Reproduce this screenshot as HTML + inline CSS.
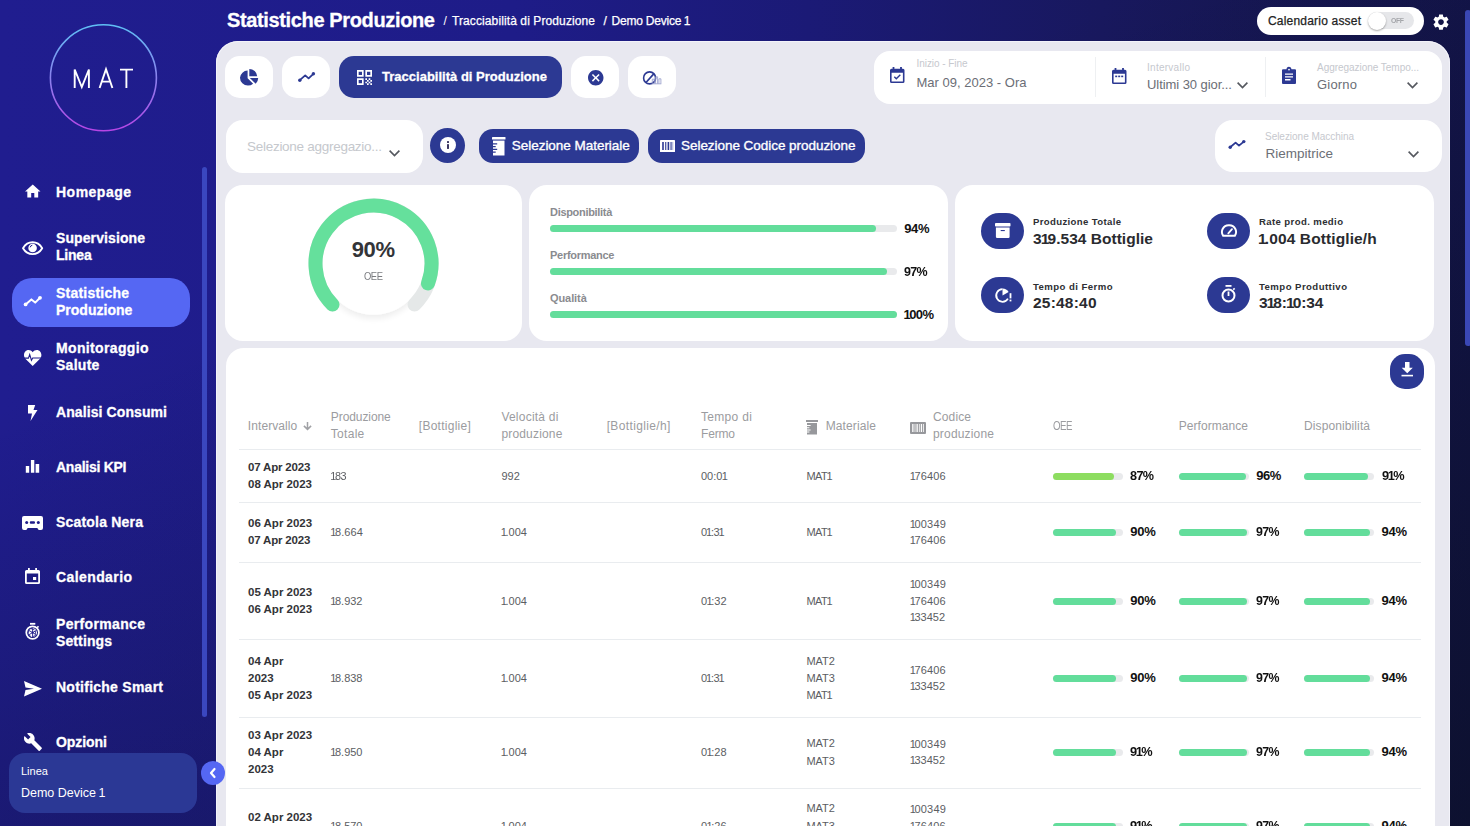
<!DOCTYPE html>
<html><head><meta charset="utf-8">
<style>
*{margin:0;padding:0;box-sizing:border-box}
html,body{width:1470px;height:826px;overflow:hidden}
body{position:relative;font-family:"Liberation Sans",sans-serif;background:linear-gradient(160deg,rgba(8,14,26,0) 30%,rgba(8,14,26,.55) 100%),linear-gradient(90deg,#201d8f 0%,#1e1c88 35%,#1b1a76 55%,#18185e 75%,#15164f 90%,#13144a 100%)}
.a{position:absolute}
.t{position:absolute;white-space:nowrap;font-family:"Liberation Sans",sans-serif}
.n1{font-weight:inherit;margin-left:-0.06em;letter-spacing:-0.12em}
.card{position:absolute;background:#fff;border-radius:18px}
.ib{position:absolute;background:#fff;border-radius:15px}
.db{position:absolute;background:#2c3993}
svg{position:absolute;overflow:visible}
.hl{position:absolute;height:1px;background:#e9ecef}
.bar{position:absolute;height:7px;border-radius:4px;background:#e9eaec}
.bar i{position:absolute;left:0;top:0;bottom:0;border-radius:4px;background:#63dd9b}
</style></head><body>
<!-- sidebar -->
<svg class="a" style="left:0;top:0" width="210" height="140">
 <defs><linearGradient id="lg" x1="0" y1="0" x2="0" y2="1"><stop offset="0" stop-color="#5fc0f5"></stop><stop offset="1" stop-color="#b745e6"></stop></linearGradient></defs>
 <circle cx="103.4" cy="77.8" r="53" fill="none" stroke="url(#lg)" stroke-width="1.6"></circle>
 <path fill="none" stroke="#fff" stroke-width="1.9" stroke-linejoin="miter" d="M74.7 88V69.5L81.8 87L88.9 69.5V88M99.6 88L106 69.2L112.4 88M101.8 81.6H110.2M120 69.6H133M126.4 69.6V88"></path>
</svg>
<div class="a" style="left:12px;top:278px;width:178px;height:49px;border-radius:20px;background:#5567f3"></div>
<div class="a" style="left:202px;top:167px;width:5px;height:550px;border-radius:3px;background:#3a47bf"></div>
<div class="a" style="left:9px;top:753px;width:188px;height:60px;border-radius:16px;background:#2b3895"></div>

<!-- nav icons -->
<svg style="left:25px;top:184px" width="15.5" height="14" viewBox="2 3 20 17"><path fill="#fff" d="M10 20v-6h4v6h5v-8h3L12 3 2 12h3v8z"></path></svg>
<svg style="left:0;top:0" width="216" height="826" viewBox="0 0 216 826"><path fill="none" stroke="#fff" stroke-width="1.9" stroke-linejoin="round" d="M23 248.2C25.4 244.2 28.8 242.3 32.6 242.3S39.8 244.2 42.2 248.2C39.8 252.2 36.4 254.1 32.6 254.1S25.4 252.2 23 248.2Z"></path><circle cx="32.6" cy="248" r="4.3" fill="#fff"></circle><path fill="none" stroke="#1f1c8a" stroke-width="1" d="M30.2 247.3A2.6 2.6 0 0 1 32.3 245.2"></path></svg>
<svg style="left:0;top:0" width="216" height="826" viewBox="0 0 216 826"><path fill="none" stroke="#fff" stroke-width="2" stroke-linejoin="round" d="M25.6 304.4L31.4 299.4L35.2 302.6L40 297.8"></path><circle cx="25.6" cy="304.4" r="1.9" fill="#fff"></circle><circle cx="40" cy="297.8" r="1.9" fill="#fff"></circle></svg>
<svg style="left:24px;top:350px" width="17.4" height="16" viewBox="0 0 18 16.5"><path fill="#fff" d="M9 16.5L1.7 9.2C.4 7.9 0 6.7 0 5.1 0 2.3 2.1 0 4.7 0 6.4 0 8 .9 9 2.4 10 .9 11.6 0 13.3 0 15.9 0 18 2.3 18 5.1c0 1.6-.4 2.8-1.7 4.1z"></path><path fill="none" stroke="#1f1c8a" stroke-width="1.1" stroke-linejoin="miter" d="M0 8.4H4.6L5.9 4.6 7.7 10.6 9 8.2H18"></path></svg>
<svg style="left:27.5px;top:405px" width="9.5" height="16" viewBox="0 0 9.5 16"><path fill="#fff" d="M0 0h7.2L5.5 5h4L2.5 16 4 8.5H0z"></path></svg>
<svg style="left:0;top:0" width="216" height="826" viewBox="0 0 216 826"><path fill="#fff" d="M25.8 466h3.4v6.7h-3.4zM30.9 460h3.4v12.7h-3.4zM35.6 464h3.6v8.7h-3.6z"></path></svg>
<svg style="left:22px;top:516px" width="21" height="14" viewBox="0 0 21 14"><path fill="#fff" d="M2 0h17a2 2 0 0 1 2 2v10a2 2 0 0 1-2 2h-2.3l-1.4-1.9H5.7L4.3 14H2a2 2 0 0 1-2-2V2a2 2 0 0 1 2-2z"></path><circle cx="4.7" cy="6.5" r="1.5" fill="#1f1c8a"></circle><rect x="7.8" y="5.3" width="5.2" height="2.5" rx="1.1" fill="#1f1c8a"></rect><circle cx="16.3" cy="6.5" r="1.5" fill="#1f1c8a"></circle></svg>
<svg style="left:25.3px;top:568px" width="15" height="16" viewBox="0 0 15 16"><path fill="#fff" d="M3 0h1.8v2h5.4V0H12v2h1.5A1.5 1.5 0 0 1 15 3.5v11a1.5 1.5 0 0 1-1.5 1.5h-12A1.5 1.5 0 0 1 0 14.5v-11A1.5 1.5 0 0 1 1.5 2H3zM1.8 5.5v8.7h11.4V5.5z"></path><rect x="8" y="9" width="3.2" height="3" fill="#fff"></rect></svg>
<svg style="left:0;top:0" width="216" height="826" viewBox="0 0 216 826"><rect x="30" y="622.9" width="5.3" height="1.8" fill="#fff"></rect><circle cx="32.6" cy="632.6" r="6.3" fill="none" stroke="#fff" stroke-width="1.8"></circle><path stroke="#fff" stroke-width="1.6" d="M37.2 627.6l1.3-1.3"></path><circle cx="32.6" cy="632.6" r="4.4" fill="#fff"></circle><path fill="none" stroke="#1f1c8a" stroke-width=".9" d="M32.6 632.6L32.6 628.2M32.6 632.6L36.4 630.4M32.6 632.6L36.4 634.8M32.6 632.6L32.6 637M32.6 632.6L28.8 634.8M32.6 632.6L28.8 630.4"></path><path fill="none" stroke="#1f1c8a" stroke-width=".8" d="M30.8 628.6l3.7 1.3M35.8 630.9l-.6 3.4M35.9 635.2l-3.4 1.6M31 636.6l-3-2.4M28 633.9l.8-3.6M28.6 629.6l3.4-1.5"></path><circle cx="32.6" cy="632.6" r="1" fill="#1f1c8a"></circle></svg>
<svg style="left:23.5px;top:681px" width="18" height="15.5" viewBox="0 0 18 15.5"><path fill="#fff" d="M0 0L18 7.75 0 15.5 1.5 9l8.5-1.25L1.5 6.5z"></path></svg>
<svg style="left:23.5px;top:733px" width="18" height="18" viewBox="1 1 22 22"><path fill="#fff" d="M22.7 19l-9.1-9.1c.9-2.3.4-5-1.5-6.9-2-2-5-2.4-7.4-1.3L9 6 6 9 1.6 4.7C.4 7.1.9 10.1 2.9 12.1c1.9 1.9 4.6 2.4 6.9 1.5l9.1 9.1c.4.4 1 .4 1.4 0l2.3-2.3c.5-.4.5-1.1.1-1.4z"></path></svg>

<!-- main panel -->
<div class="a" style="left:216px;top:41px;width:1234px;height:800px;background:#e8e8f0;border-radius:22px 22px 0 0;box-shadow:inset 0 0 0 1px #f3f3fa"></div>
<!-- collapse button -->
<div class="a" style="left:201px;top:761px;width:24px;height:24px;border-radius:12px;background:#5567f3"></div>
<svg style="left:208px;top:767px" width="10" height="12" viewBox="0 0 10 12"><path fill="none" stroke="#fff" stroke-width="2.2" stroke-linecap="round" stroke-linejoin="round" d="M6.5 2L3 6l3.5 4"></path></svg>
<!-- right scrollbar -->
<div class="a" style="left:1465px;top:10px;width:6px;height:336px;border-radius:3px;background:#3a47b5"></div>

<!-- header toggle -->
<div class="a" style="left:1257px;top:7px;width:167px;height:28px;border-radius:14px;background:#fff"></div>
<div class="a" style="left:1368px;top:12px;width:46px;height:17px;border-radius:9px;background:#e6e7ea"></div>
<div class="a" style="left:1368px;top:12px;width:18px;height:18px;border-radius:9px;background:#fff;box-shadow:0 1px 2px rgba(0,0,0,.35)"></div>
<svg style="left:1433px;top:13.8px" width="16" height="16.2" viewBox="2.6 1.9 18.8 20.2"><path fill="#fff" d="M19.14 12.94c.04-.3.06-.61.06-.94 0-.32-.02-.64-.07-.94l2.03-1.58c.18-.14.23-.41.12-.61l-1.92-3.32c-.12-.22-.37-.29-.59-.22l-2.39.96c-.5-.38-1.03-.7-1.62-.94l-.36-2.54c-.04-.24-.24-.41-.48-.41h-3.840c-.24 0-.43.17-.47.41l-.36 2.54c-.59.24-1.13.57-1.62.94l-2.39-.96c-.22-.08-.47 0-.59.22L2.74 8.87c-.12.21-.08.47.12.61l2.030 1.58c-.05.3-.09.63-.09.94s.02.64.07.94l-2.03 1.58c-.18.14-.23.41-.12.61l1.92 3.32c.12.22.37.29.59.22l2.39-.96c.5.38 1.03.7 1.62.94l.36 2.54c.05.24.24.41.48.41h3.84c.24 0 .44-.17.47-.41l.36-2.54c.59-.24 1.13-.56 1.62-.94l2.39.96c.22.08.47 0 .59-.22l1.920-3.32c.12-.22.07-.47-.12-.61l-2.01-1.58zM12 15.6c-1.98 0-3.6-1.62-3.6-3.6s1.62-3.6 3.6-3.6 3.6 1.62 3.6 3.6-1.62 3.6-3.6 3.6z"></path></svg>

<!-- toolbar row 1 -->
<div class="ib" style="left:225px;top:56px;width:48px;height:42px"></div>
<div class="ib" style="left:282px;top:56px;width:48px;height:42px"></div>
<div class="db" style="left:339px;top:56px;width:223px;height:42px;border-radius:15px"></div>
<div class="ib" style="left:570.5px;top:56px;width:48px;height:42px"></div>
<div class="ib" style="left:628px;top:56px;width:48px;height:42px"></div>
<svg style="left:240px;top:69px" width="18.5" height="17" viewBox="0 0 18.5 17"><path fill="#2c3993" d="M7.6 1.6V9.2l5.5 5.5A8.2 8.2 0 0 1 8 16.6 7.9 7.9 0 0 1 0 8.7 7.8 7.8 0 0 1 7.6 1.6z"></path><path fill="#2c3993" d="M9.3 0a8 8 0 0 1 7.9 7.3H9.3z"></path><path fill="#2c3993" d="M9.8 9.1h8.4a8 8 0 0 1-2.5 5.6z"></path></svg>
<svg style="left:250px;top:60px" width="100" height="40" viewBox="250 60 100 40"><path fill="none" stroke="#2c3993" stroke-width="1.8" stroke-linejoin="round" d="M299.8 80.2L305.2 75.4L308.6 78.4L313.4 73.8"></path><circle cx="299.8" cy="80.2" r="1.7" fill="#2c3993"></circle><circle cx="313.4" cy="73.8" r="1.7" fill="#2c3993"></circle></svg>
<svg style="left:356.5px;top:70px" width="15" height="15" viewBox="3 3 18 18"><path fill="#fff" d="M3 11h8V3H3v8zm2-6h4v4H5V5zM3 21h8v-8H3v8zm2-6h4v4H5v-4zM13 3v8h8V3h-8zm6 6h-4V5h4v4zM19 19h2v2h-2zM13 13h2v2h-2zM15 15h2v2h-2zM13 17h2v2h-2zM15 19h2v2h-2zM17 17h2v2h-2zM17 13h2v2h-2zM19 15h2v2h-2z"></path></svg>
<svg style="left:587.5px;top:70px" width="15.5" height="15.5" viewBox="2 2 20 20"><path fill="#2c3993" d="M12 2C6.47 2 2 6.47 2 12s4.47 10 10 10 10-4.47 10-10S17.530 2 12 2zm5 13.590L15.59 17 12 13.41 8.41 17 7 15.59 10.59 12 7 8.41 8.41 7 12 10.59 15.59 7 17 8.41 13.41 12 17 15.59z"></path></svg>
<svg style="left:630px;top:60px" width="40" height="35" viewBox="630 60 40 35"><circle cx="649.6" cy="77.9" r="6" fill="none" stroke="#2c3993" stroke-width="1.6"></circle><path stroke="#2c3993" stroke-width="1.7" d="M646.2 82.3L654 73.6"></path><path fill="none" stroke="#9097c8" stroke-width=".8" d="M652.3 83.6v-4.4h2v4.4M655.6 83.6v-6.8h2v6.8M658.9 83.6v-4.8h2v4.8M651.8 83.8h9.5"></path></svg>

<!-- date panel -->
<div class="card" style="left:874px;top:51px;width:567.5px;height:53px;border-radius:16px"></div>
<div class="a" style="left:1095px;top:57px;width:1px;height:40px;background:#eef0f2"></div>
<div class="a" style="left:1265px;top:57px;width:1px;height:40px;background:#eef0f2"></div>
<svg style="left:890px;top:67px" width="14.5" height="16" viewBox="0 0 14.5 16"><path fill="#2c3993" d="M2.6 0h1.8v1.8h5.7V0h1.8v1.8h1.1a1.5 1.5 0 0 1 1.5 1.5V14.5a1.5 1.5 0 0 1-1.5 1.5H1.5A1.5 1.5 0 0 1 0 14.5V3.3a1.5 1.5 0 0 1 1.5-1.5h1.1zM1.6 5.8v8.6h11.3V5.8z"></path><path fill="none" stroke="#2c3993" stroke-width="1.4" d="M4.3 9.8l2 2 4-4"></path></svg>
<svg style="left:1111.5px;top:68px" width="14.5" height="16" viewBox="0 0 14.5 16"><path fill="#2c3993" d="M2.6 0h1.8v1.8h5.7V0h1.8v1.8h1.1a1.5 1.5 0 0 1 1.5 1.5V14.5a1.5 1.5 0 0 1-1.5 1.5H1.5A1.5 1.5 0 0 1 0 14.5V3.3a1.5 1.5 0 0 1 1.5-1.5h1.1zM1.6 5.8v8.6h11.3V5.8z"></path><rect x="3.2" y="7.6" width="2" height="1.6" fill="#2c3993"></rect><rect x="6.2" y="7.6" width="2" height="1.6" fill="#2c3993"></rect><rect x="9.2" y="7.6" width="2" height="1.6" fill="#2c3993"></rect></svg>
<svg style="left:1282px;top:67.5px" width="14" height="16" viewBox="0 0 14 16"><path fill="#2c3993" d="M4.5 1.2A2.5 2.5 0 0 1 9.5 1.2H13a1 1 0 0 1 1 1V15a1 1 0 0 1-1 1H1a1 1 0 0 1-1-1V2.2a1 1 0 0 1 1-1z"></path><path fill="#fff" d="M3 5.5h8v1.3H3zM3 8.3h8v1.3H3zM3 11.1h5.5v1.3H3z"></path><circle cx="7" cy="1.6" r="0.9" fill="#fff"></circle></svg>
<svg style="left:1237px;top:81.5px" width="11" height="7" viewBox="0 0 11 7"><path fill="none" stroke="#55585f" stroke-width="1.6" d="M.6.6l4.9 5 4.9-5"></path></svg>
<svg style="left:1407px;top:81.5px" width="11" height="7" viewBox="0 0 11 7"><path fill="none" stroke="#55585f" stroke-width="1.6" d="M.6.6l4.9 5 4.9-5"></path></svg>

<!-- toolbar row 2 -->
<div class="card" style="left:225.5px;top:119.5px;width:197.5px;height:53px;border-radius:17px"></div>
<svg style="left:388.5px;top:150px" width="11" height="7" viewBox="0 0 11 7"><path fill="none" stroke="#55585f" stroke-width="1.6" d="M.6.6l4.9 5 4.9-5"></path></svg>
<div class="db" style="left:430px;top:128px;width:35px;height:35px;border-radius:18px"></div>
<div class="a" style="left:439.8px;top:137px;width:16.4px;height:16.4px;border-radius:9px;background:#fff"></div>
<div class="a" style="left:446.9px;top:141.2px;width:2px;height:1.9px;border-radius:.5px;background:#3a3560"></div>
<div class="a" style="left:446.9px;top:144.2px;width:2px;height:4.8px;border-radius:.4px;background:#3a3560"></div>
<div class="db" style="left:478.5px;top:128.5px;width:160px;height:34.5px;border-radius:14px"></div>
<div class="db" style="left:648px;top:128.5px;width:216.5px;height:34.5px;border-radius:14px"></div>
<svg style="left:492px;top:137px" width="13.5" height="18.5" viewBox="0 0 13.5 18.5"><rect x="0" y="0" width="13.5" height="2.6" rx=".6" fill="#fff"></rect><path fill="#fff" d="M1 3.6h11.5v14.9H1z"></path><path fill="#2c3993" d="M1 6.2h4.2v1.2H1zM1 9h2.7v1.2H1zM1 11.8h4.2V13H1zM1 14.6h2.7v1.2H1z"></path></svg>
<svg style="left:660px;top:140px" width="15" height="12" viewBox="0 0 15 12"><rect x="0" y="0" width="15" height="12" rx=".6" fill="#fff"></rect><path fill="#2c3993" d="M2.2 2h1.6v8H2.2zM5.2 2h1.1v8H5.2zM7.6 2h1.6v8H7.6zM10.5 2h1.1v8h-1.1z"></path><path fill="#8f96cc" d="M12.4 2h.8v8h-.8z"></path></svg>
<div class="card" style="left:1214.5px;top:120px;width:227px;height:52px;border-radius:18px"></div>
<svg style="left:1220px;top:130px" width="40" height="30" viewBox="1220 130 40 30"><path fill="none" stroke="#2c3993" stroke-width="1.8" stroke-linejoin="round" d="M1230.2 147.2L1235.6 142.6L1239 145.6L1243.8 141.6"></path><circle cx="1230.2" cy="147.2" r="1.7" fill="#2c3993"></circle><circle cx="1243.8" cy="141.6" r="1.7" fill="#2c3993"></circle></svg>
<svg style="left:1408px;top:150.5px" width="11" height="7" viewBox="0 0 11 7"><path fill="none" stroke="#55585f" stroke-width="1.6" d="M.6.6l4.9 5 4.9-5"></path></svg>

<!-- cards row -->
<div class="card" style="left:225px;top:185px;width:297px;height:156px"></div>
<div class="card" style="left:529px;top:185px;width:419px;height:156px"></div>
<div class="card" style="left:954.5px;top:185px;width:479.5px;height:156px"></div>

<!-- gauge -->
<svg style="left:300px;top:190px" width="148" height="140" viewBox="300 190 148 140">
 <defs><filter id="sh" x="-30%" y="-30%" width="160%" height="160%"><feGaussianBlur in="SourceAlpha" stdDeviation="3"></feGaussianBlur><feOffset dy="4"></feOffset><feComponentTransfer><feFuncA type="linear" slope=".07"></feFuncA></feComponentTransfer><feMerge><feMergeNode></feMergeNode><feMergeNode in="SourceGraphic"></feMergeNode></feMerge></filter></defs>
 <circle cx="373.5" cy="263.6" r="51" fill="#fff" filter="url(#sh)"></circle>
 <path id="gbg" fill="none" stroke="#e5e8e8" stroke-width="14" stroke-linecap="round" d="M332.49 304.61 A58 58 0 1 1 414.51 304.61"></path>
 <path fill="none" stroke="#65e09c" stroke-width="14" stroke-linecap="round" d="M332.49 304.61 A58 58 0 1 1 428.0 283.44"></path>
</svg>

<!-- bars card -->
<div class="bar" style="left:550px;top:224.5px;width:347px"><i style="width:326px"></i></div>
<div class="bar" style="left:550px;top:268px;width:347px"><i style="width:337px"></i></div>
<div class="bar" style="left:550px;top:311.3px;width:347px"><i style="width:347px"></i></div>

<!-- KPI icons -->
<div class="db" style="left:981px;top:212.5px;width:42.5px;height:36px;border-radius:18px"></div>
<div class="db" style="left:981px;top:277px;width:42.5px;height:36px;border-radius:18px"></div>
<div class="db" style="left:1207px;top:212.5px;width:42.5px;height:36px;border-radius:18px"></div>
<div class="db" style="left:1207px;top:277px;width:42.5px;height:36px;border-radius:18px"></div>
<svg style="left:994.5px;top:223px" width="15.5" height="15" viewBox="0 0 15.5 15"><rect x="0" y="0" width="15.5" height="3.6" rx=".8" fill="#fff"></rect><path fill="#fff" d="M.9 4.6h13.7v9.2a1.2 1.2 0 0 1-1.2 1.2H2.1A1.2 1.2 0 0 1 .9 13.8z"></path><rect x="5.7" y="7" width="4.1" height="1.1" fill="#2c3993"></rect></svg>
<svg style="left:1220.5px;top:224px" width="16" height="13" viewBox="0 0 16 13"><path fill="none" stroke="#fff" stroke-width="2" d="M2.2 11.8A6.7 6.7 0 0 1 8 1.2a6.7 6.7 0 0 1 5.8 10.6z"></path><path stroke="#fff" stroke-width="1.8" stroke-linecap="round" d="M7.3 9.4L11 5.2"></path></svg>
<svg style="left:960px;top:260px" width="80" height="80" viewBox="960 260 80 80"><path fill="none" stroke="#fff" stroke-width="1.8" d="M1002.5 289.2A6.3 6.3 0 1 0 1007.96 298.65"></path><path fill="#fff" d="M1002.5 295.5V288.4A7.1 7.1 0 0 1 1008.65 291.95z"></path><rect x="1009.6" y="293.2" width="1.8" height="5.2" fill="#fff"></rect><rect x="1009.6" y="299.6" width="1.8" height="1.8" fill="#fff"></rect></svg>
<svg style="left:1221px;top:285px" width="15" height="18" viewBox="0 0 15 18"><rect x="4.5" y="0" width="6" height="1.8" fill="#fff"></rect><circle cx="7.5" cy="10.5" r="6" fill="none" stroke="#fff" stroke-width="2"></circle><path stroke="#fff" stroke-width="1.8" d="M7.5 6.5v4.5"></path><path stroke="#fff" stroke-width="1.6" d="M12.2 4.6l1.5-1.3"></path></svg>

<!-- table card -->
<div class="card" style="left:225.5px;top:348px;width:1209px;height:500px"></div>
<div class="db" style="left:1389.5px;top:354px;width:34.5px;height:34.5px;border-radius:15px"></div>
<svg style="left:1400.5px;top:362px" width="12.5" height="15" viewBox="0 0 12.5 15"><path fill="#fff" d="M4 0h4.5v5.8h3.3L6.25 11.2.7 5.8H4z"></path><rect x="0.5" y="12.8" width="11.5" height="1.6" fill="#fff"></rect></svg>
<svg style="left:302.5px;top:422px" width="9" height="8" viewBox="0 0 9 8"><path fill="none" stroke="#a0a1a5" stroke-width="1.5" d="M4.5 0v7.2M.9 3.9l3.6 3.5 3.6-3.5"></path></svg>
<svg style="left:806px;top:419.5px" width="12" height="14.5" viewBox="0 0 12 14.5"><rect x="0" y="0" width="12" height="2" fill="#97989c"></rect><path fill="#97989c" d="M1 3h10v11.5H1z"></path><path fill="#fff" d="M1 5h3.6v1H1zM1 7.2h2.4v1H1zM1 9.4h3.6v1H1zM1 11.6h2.4v1H1z"></path></svg>
<svg style="left:909.5px;top:421.5px" width="16" height="12" viewBox="0 0 16 12"><rect x="0" y="0" width="16" height="12" rx="1" fill="#97989c"></rect><path fill="#fff" d="M2.2 2h1.3v8H2.2zM4.6 2h.8v8h-.8zM6.5 2h1.3v8H6.5zM8.9 2h.8v8h-.8zM10.8 2h1.3v8h-1.3zM13 2h.8v8H13z"></path></svg>
<div class="hl" style="left:239px;top:449px;width:1182px"></div>
<div class="hl" style="left:239px;top:502px;width:1182px"></div>
<div class="hl" style="left:239px;top:562px;width:1182px"></div>
<div class="hl" style="left:239px;top:639px;width:1182px"></div>
<div class="hl" style="left:239px;top:717px;width:1182px"></div>
<div class="hl" style="left:239px;top:787.5px;width:1182px"></div>
<div class="bar" style="left:1052.8px;top:472.5px;width:70px"><i style="width:60.9px;background:#8ddd60"></i></div>
<div class="bar" style="left:1178.8px;top:472.5px;width:70px"><i style="width:67.2px;background:#63dd9b"></i></div>
<div class="bar" style="left:1304.0px;top:472.5px;width:70px"><i style="width:63.7px;background:#63dd9b"></i></div>
<div class="bar" style="left:1052.8px;top:529.0px;width:70px"><i style="width:63.0px;background:#63dd9b"></i></div>
<div class="bar" style="left:1178.8px;top:529.0px;width:70px"><i style="width:67.9px;background:#63dd9b"></i></div>
<div class="bar" style="left:1304.0px;top:529.0px;width:70px"><i style="width:65.8px;background:#63dd9b"></i></div>
<div class="bar" style="left:1052.8px;top:597.5px;width:70px"><i style="width:63.0px;background:#63dd9b"></i></div>
<div class="bar" style="left:1178.8px;top:597.5px;width:70px"><i style="width:67.9px;background:#63dd9b"></i></div>
<div class="bar" style="left:1304.0px;top:597.5px;width:70px"><i style="width:65.8px;background:#63dd9b"></i></div>
<div class="bar" style="left:1052.8px;top:675.0px;width:70px"><i style="width:63.0px;background:#63dd9b"></i></div>
<div class="bar" style="left:1178.8px;top:675.0px;width:70px"><i style="width:67.9px;background:#63dd9b"></i></div>
<div class="bar" style="left:1304.0px;top:675.0px;width:70px"><i style="width:65.8px;background:#63dd9b"></i></div>
<div class="bar" style="left:1052.8px;top:749.0px;width:70px"><i style="width:63.7px;background:#63dd9b"></i></div>
<div class="bar" style="left:1178.8px;top:749.0px;width:70px"><i style="width:67.9px;background:#63dd9b"></i></div>
<div class="bar" style="left:1304.0px;top:749.0px;width:70px"><i style="width:65.8px;background:#63dd9b"></i></div>
<div class="bar" style="left:1052.8px;top:822.5px;width:70px"><i style="width:63.7px;background:#63dd9b"></i></div>
<div class="bar" style="left:1178.8px;top:822.5px;width:70px"><i style="width:67.9px;background:#63dd9b"></i></div>
<div class="bar" style="left:1304.0px;top:822.5px;width:70px"><i style="width:65.8px;background:#63dd9b"></i></div>

<span class="t" style="left: 227px; top: 10.07px; font-size: 20px; line-height: 20px; font-weight: 700; color: rgb(255, 255, 255); -webkit-text-stroke: 0.3px rgb(255, 255, 255); letter-spacing: -0.362px;">Statistiche Produzione</span>
<span class="t" style="left:443.50px;top:15.34px;font-size:12px;line-height:12px;font-weight:700;color:#ffffff;-webkit-text-stroke:0.3px #ffffff;-webkit-text-stroke:0;font-weight:400;">/</span>
<span class="t" style="left: 452px; top: 15.34px; font-size: 12px; line-height: 12px; font-weight: 400; color: rgb(255, 255, 255); -webkit-text-stroke: 0.25px rgb(255, 255, 255); letter-spacing: 0.104px;">Tracciabilità di Produzione</span>
<span class="t" style="left:603.50px;top:15.34px;font-size:12px;line-height:12px;font-weight:400;color:#ffffff;-webkit-text-stroke:0.25px #ffffff;font-weight:400;">/</span>
<span class="t" style="left: 611.5px; top: 15.34px; font-size: 12px; line-height: 12px; font-weight: 400; color: rgb(255, 255, 255); -webkit-text-stroke: 0.25px rgb(255, 255, 255); letter-spacing: -0.198px;">Demo Device <b class="n1">1</b></span>
<span class="t" style="left: 1268px; top: 14.54px; font-size: 12px; line-height: 12px; font-weight: 400; color: rgb(34, 34, 34); -webkit-text-stroke: 0.25px rgb(34, 34, 34); letter-spacing: 0.196px;">Calendario asset</span>
<span class="t" style="left: 1390.7px; top: 17.05px; font-size: 7.5px; line-height: 7.5px; font-weight: 700; color: rgb(164, 166, 170); letter-spacing: -0.375px; transform: scaleX(0.9123); transform-origin: 0px 0px;">OFF</span>
<span class="t" style="left: 56px; top: 185.15px; font-size: 14px; line-height: 14px; font-weight: 700; color: rgb(255, 255, 255); -webkit-text-stroke: 0.3px rgb(255, 255, 255); letter-spacing: 0.489px;">Homepage</span>
<span class="t" style="left: 56px; top: 231.15px; font-size: 14px; line-height: 14px; font-weight: 700; color: rgb(255, 255, 255); -webkit-text-stroke: 0.3px rgb(255, 255, 255); letter-spacing: 0.098px;">Supervisione</span>
<span class="t" style="left: 56px; top: 247.95px; font-size: 14px; line-height: 14px; font-weight: 700; color: rgb(255, 255, 255); -webkit-text-stroke: 0.3px rgb(255, 255, 255); letter-spacing: -0.22px;">Linea</span>
<span class="t" style="left: 56px; top: 286.15px; font-size: 14px; line-height: 14px; font-weight: 700; color: rgb(255, 255, 255); -webkit-text-stroke: 0.3px rgb(255, 255, 255); letter-spacing: 0.219px;">Statistiche</span>
<span class="t" style="left: 56px; top: 302.95px; font-size: 14px; line-height: 14px; font-weight: 700; color: rgb(255, 255, 255); -webkit-text-stroke: 0.3px rgb(255, 255, 255); letter-spacing: 0.007px;">Produzione</span>
<span class="t" style="left: 56px; top: 341.15px; font-size: 14px; line-height: 14px; font-weight: 700; color: rgb(255, 255, 255); -webkit-text-stroke: 0.3px rgb(255, 255, 255); letter-spacing: 0.349px;">Monitoraggio</span>
<span class="t" style="left: 56px; top: 357.95px; font-size: 14px; line-height: 14px; font-weight: 700; color: rgb(255, 255, 255); -webkit-text-stroke: 0.3px rgb(255, 255, 255); letter-spacing: 0.277px;">Salute</span>
<span class="t" style="left: 56px; top: 405.15px; font-size: 14px; line-height: 14px; font-weight: 700; color: rgb(255, 255, 255); -webkit-text-stroke: 0.3px rgb(255, 255, 255); letter-spacing: 0.094px;">Analisi Consumi</span>
<span class="t" style="left: 56px; top: 460.15px; font-size: 14px; line-height: 14px; font-weight: 700; color: rgb(255, 255, 255); -webkit-text-stroke: 0.3px rgb(255, 255, 255); letter-spacing: -0.264px;">Analisi KPI</span>
<span class="t" style="left: 56px; top: 515.15px; font-size: 14px; line-height: 14px; font-weight: 700; color: rgb(255, 255, 255); -webkit-text-stroke: 0.3px rgb(255, 255, 255); letter-spacing: 0.197px;">Scatola Nera</span>
<span class="t" style="left: 56px; top: 570.15px; font-size: 14px; line-height: 14px; font-weight: 700; color: rgb(255, 255, 255); -webkit-text-stroke: 0.3px rgb(255, 255, 255); letter-spacing: 0.405px;">Calendario</span>
<span class="t" style="left: 56px; top: 617.15px; font-size: 14px; line-height: 14px; font-weight: 700; color: rgb(255, 255, 255); -webkit-text-stroke: 0.3px rgb(255, 255, 255); letter-spacing: 0.341px;">Performance</span>
<span class="t" style="left: 56px; top: 633.95px; font-size: 14px; line-height: 14px; font-weight: 700; color: rgb(255, 255, 255); -webkit-text-stroke: 0.3px rgb(255, 255, 255); letter-spacing: 0.109px;">Settings</span>
<span class="t" style="left: 56px; top: 680.15px; font-size: 14px; line-height: 14px; font-weight: 700; color: rgb(255, 255, 255); -webkit-text-stroke: 0.3px rgb(255, 255, 255); letter-spacing: 0.252px;">Notifiche Smart</span>
<span class="t" style="left: 56px; top: 735.15px; font-size: 14px; line-height: 14px; font-weight: 700; color: rgb(255, 255, 255); -webkit-text-stroke: 0.3px rgb(255, 255, 255); letter-spacing: -0.071px;">Opzioni</span>
<span class="t" style="left:21.00px;top:765.69px;font-size:11px;line-height:11px;font-weight:400;color:#ffffff;">Linea</span>
<span class="t" style="left: 21px; top: 787.22px; font-size: 12.5px; line-height: 12.5px; font-weight: 400; color: rgb(255, 255, 255); letter-spacing: -0.017px;">Demo Device <b class="n1">1</b></span>
<span class="t" style="left: 382px; top: 69.8px; font-size: 13px; line-height: 13px; font-weight: 700; color: rgb(255, 255, 255); -webkit-text-stroke: 0.3px rgb(255, 255, 255); letter-spacing: 0.011px;">Tracciabilità di Produzione</span>
<span class="t" style="left: 916.5px; top: 58.94px; font-size: 10px; line-height: 10px; font-weight: 400; color: rgb(198, 200, 206); letter-spacing: -0.057px;">Inizio - Fine</span>
<span class="t" style="left: 916.5px; top: 75.6px; font-size: 13px; line-height: 13px; font-weight: 400; color: rgb(107, 110, 118); letter-spacing: 0.01px;">Mar 09, 2023 - Ora</span>
<span class="t" style="left: 1147px; top: 62.94px; font-size: 10px; line-height: 10px; font-weight: 400; color: rgb(198, 200, 206); letter-spacing: 0.269px;">Intervallo</span>
<span class="t" style="left: 1147px; top: 78px; font-size: 13px; line-height: 13px; font-weight: 400; color: rgb(107, 110, 118); letter-spacing: -0.062px;">Ultimi 30 gior...</span>
<span class="t" style="left: 1317px; top: 62.94px; font-size: 10px; line-height: 10px; font-weight: 400; color: rgb(198, 200, 206); letter-spacing: -0.034px;">Aggregazione Tempo...</span>
<span class="t" style="left: 1317px; top: 78px; font-size: 13px; line-height: 13px; font-weight: 400; color: rgb(107, 110, 118); letter-spacing: 0.194px;">Giorno</span>
<span class="t" style="left: 247px; top: 139.57px; font-size: 13.5px; line-height: 13.5px; font-weight: 400; color: rgb(197, 200, 205); letter-spacing: -0.278px;">Selezione aggregazio...</span>
<span class="t" style="left: 511.8px; top: 139.27px; font-size: 13.5px; line-height: 13.5px; font-weight: 400; color: rgb(255, 255, 255); -webkit-text-stroke: 0.35px rgb(255, 255, 255); letter-spacing: -0.032px;">Selezione Materiale</span>
<span class="t" style="left: 681px; top: 139.27px; font-size: 13.5px; line-height: 13.5px; font-weight: 400; color: rgb(255, 255, 255); -webkit-text-stroke: 0.35px rgb(255, 255, 255); letter-spacing: -0.043px;">Selezione Codice produzione</span>
<span class="t" style="left: 1265px; top: 131.84px; font-size: 10px; line-height: 10px; font-weight: 400; color: rgb(198, 200, 206); letter-spacing: -0.029px;">Selezione Macchina</span>
<span class="t" style="left: 1265.4px; top: 146.57px; font-size: 13.5px; line-height: 13.5px; font-weight: 400; color: rgb(108, 111, 118); letter-spacing: -0.002px;">Riempitrice</span>
<span class="t" style="left: 351.8px; top: 239.18px; font-size: 22px; line-height: 22px; font-weight: 700; color: rgb(51, 52, 56); letter-spacing: -0.423px;">90%</span>
<span class="t" style="left: 363.8px; top: 271.31px; font-size: 10.5px; line-height: 10.5px; font-weight: 400; color: rgb(122, 124, 128); letter-spacing: -0.525px; transform: scaleX(0.8989); transform-origin: 0px 0px;">OEE</span>
<span class="t" style="left: 550px; top: 206.69px; font-size: 11px; line-height: 11px; font-weight: 700; color: rgb(138, 139, 143); letter-spacing: -0.308px;">Disponibilità</span>
<span class="t" style="left: 550px; top: 249.69px; font-size: 11px; line-height: 11px; font-weight: 700; color: rgb(138, 139, 143); letter-spacing: -0.277px;">Performance</span>
<span class="t" style="left: 550px; top: 292.69px; font-size: 11px; line-height: 11px; font-weight: 700; color: rgb(138, 139, 143); letter-spacing: -0.083px;">Qualità</span>
<span class="t" style="left: 904.3px; top: 221.6px; font-size: 13px; line-height: 13px; font-weight: 700; color: rgb(17, 17, 17); letter-spacing: -0.416px;">94%</span>
<span class="t" style="left: 904.3px; top: 264.6px; font-size: 13px; line-height: 13px; font-weight: 700; color: rgb(17, 17, 17); letter-spacing: -0.65px; transform: scaleX(0.9583); transform-origin: 0px 0px;">97%</span>
<span class="t" style="left: 904.3px; top: 307.6px; font-size: 13px; line-height: 13px; font-weight: 700; color: rgb(17, 17, 17); letter-spacing: -0.634px;"><b class="n1">1</b>00%</span>
<span class="t" style="left: 1033px; top: 216.87px; font-size: 9.6px; line-height: 9.6px; font-weight: 700; color: rgb(46, 47, 51); letter-spacing: 0.348px;">Produzione Totale</span>
<span class="t" style="left: 1033px; top: 231.08px; font-size: 15.5px; line-height: 15.5px; font-weight: 700; color: rgb(42, 43, 47); letter-spacing: 0.027px;">3<b class="n1">1</b>9.534 Bottiglie</span>
<span class="t" style="left: 1033px; top: 282.07px; font-size: 9.6px; line-height: 9.6px; font-weight: 700; color: rgb(46, 47, 51); letter-spacing: 0.429px;">Tempo di Fermo</span>
<span class="t" style="left: 1033px; top: 295.48px; font-size: 15.5px; line-height: 15.5px; font-weight: 700; color: rgb(42, 43, 47); letter-spacing: 0.208px;">25:48:40</span>
<span class="t" style="left: 1259px; top: 216.87px; font-size: 9.6px; line-height: 9.6px; font-weight: 700; color: rgb(46, 47, 51); letter-spacing: 0.376px;">Rate prod. medio</span>
<span class="t" style="left: 1259px; top: 231.08px; font-size: 15.5px; line-height: 15.5px; font-weight: 700; color: rgb(42, 43, 47); letter-spacing: 0.105px;"><b class="n1">1</b>.004 Bottiglie/h</span>
<span class="t" style="left: 1259px; top: 282.07px; font-size: 9.6px; line-height: 9.6px; font-weight: 700; color: rgb(46, 47, 51); letter-spacing: 0.442px;">Tempo Produttivo</span>
<span class="t" style="left: 1259px; top: 295.48px; font-size: 15.5px; line-height: 15.5px; font-weight: 700; color: rgb(42, 43, 47); letter-spacing: -0.143px;">3<b class="n1">1</b>8:<b class="n1">1</b>0:34</span>
<span class="t" style="left: 247.8px; top: 419.54px; font-size: 12px; line-height: 12px; font-weight: 400; color: rgb(155, 156, 160); letter-spacing: 0.089px;">Intervallo</span>
<span class="t" style="left: 330.8px; top: 410.84px; font-size: 12px; line-height: 12px; font-weight: 400; color: rgb(155, 156, 160); letter-spacing: -0.08px;">Produzione</span>
<span class="t" style="left: 330.8px; top: 428.34px; font-size: 12px; line-height: 12px; font-weight: 400; color: rgb(155, 156, 160); letter-spacing: 0.294px;">Totale</span>
<span class="t" style="left: 418.8px; top: 419.54px; font-size: 12px; line-height: 12px; font-weight: 400; color: rgb(155, 156, 160); letter-spacing: 0.264px;">[Bottiglie]</span>
<span class="t" style="left: 501.4px; top: 410.84px; font-size: 12px; line-height: 12px; font-weight: 400; color: rgb(155, 156, 160); letter-spacing: 0.23px;">Velocità di</span>
<span class="t" style="left: 501.4px; top: 428.34px; font-size: 12px; line-height: 12px; font-weight: 400; color: rgb(155, 156, 160); letter-spacing: 0.179px;">produzione</span>
<span class="t" style="left: 606.7px; top: 419.54px; font-size: 12px; line-height: 12px; font-weight: 400; color: rgb(155, 156, 160); letter-spacing: 0.352px;">[Bottiglie/h]</span>
<span class="t" style="left: 701px; top: 410.84px; font-size: 12px; line-height: 12px; font-weight: 400; color: rgb(155, 156, 160); letter-spacing: 0.3px;">Tempo di</span>
<span class="t" style="left: 701px; top: 428.34px; font-size: 12px; line-height: 12px; font-weight: 400; color: rgb(155, 156, 160); letter-spacing: -0.168px;">Fermo</span>
<span class="t" style="left: 825.7px; top: 419.54px; font-size: 12px; line-height: 12px; font-weight: 400; color: rgb(155, 156, 160); letter-spacing: 0.118px;">Materiale</span>
<span class="t" style="left: 933px; top: 410.84px; font-size: 12px; line-height: 12px; font-weight: 400; color: rgb(155, 156, 160); letter-spacing: 0.128px;">Codice</span>
<span class="t" style="left: 933px; top: 428.34px; font-size: 12px; line-height: 12px; font-weight: 400; color: rgb(155, 156, 160); letter-spacing: 0.179px;">produzione</span>
<span class="t" style="left: 1052.8px; top: 419.54px; font-size: 12px; line-height: 12px; font-weight: 400; color: rgb(155, 156, 160); letter-spacing: -0.6px; transform: scaleX(0.8077); transform-origin: 0px 0px;">OEE</span>
<span class="t" style="left: 1178.8px; top: 419.54px; font-size: 12px; line-height: 12px; font-weight: 400; color: rgb(155, 156, 160); letter-spacing: 0.05px;">Performance</span>
<span class="t" style="left: 1304px; top: 419.54px; font-size: 12px; line-height: 12px; font-weight: 400; color: rgb(155, 156, 160); letter-spacing: 0.108px;">Disponibilità</span>
<span class="t" style="left: 248px; top: 461.89px; font-size: 11.5px; line-height: 11.5px; font-weight: 700; color: rgb(51, 52, 56); letter-spacing: -0.176px;">07 Apr 2023</span>
<span class="t" style="left: 248px; top: 478.69px; font-size: 11.5px; line-height: 11.5px; font-weight: 700; color: rgb(51, 52, 56); letter-spacing: -0.016px;">08 Apr 2023</span>
<span class="t" style="left: 330.8px; top: 470.54px; font-size: 11px; line-height: 11px; font-weight: 400; color: rgb(91, 93, 98); letter-spacing: -0.55px; transform: scaleX(0.9898); transform-origin: 0px 0px;"><b class="n1">1</b>83</span>
<span class="t" style="left:501.40px;top:470.54px;font-size:11px;line-height:11px;font-weight:400;color:#5b5d62;">992</span>
<span class="t" style="left:701.00px;top:470.54px;font-size:11px;line-height:11px;font-weight:400;color:#5b5d62;">00:0<b class="n1">1</b></span>
<span class="t" style="left: 806.4px; top: 470.54px; font-size: 11px; line-height: 11px; font-weight: 400; color: rgb(91, 93, 98); letter-spacing: -0.521px;">MAT<b class="n1">1</b></span>
<span class="t" style="left: 910.3px; top: 470.54px; font-size: 11px; line-height: 11px; font-weight: 400; color: rgb(91, 93, 98); letter-spacing: 0.119px;"><b class="n1">1</b>76406</span>
<span class="t" style="left: 1130.3px; top: 468.65px; font-size: 13px; line-height: 13px; font-weight: 700; color: rgb(17, 17, 17); letter-spacing: -0.65px; transform: scaleX(0.9704); transform-origin: 0px 0px;">87%</span>
<span class="t" style="left: 1256.3px; top: 468.65px; font-size: 13px; line-height: 13px; font-weight: 700; color: rgb(17, 17, 17); letter-spacing: -0.516px;">96%</span>
<span class="t" style="left: 1381.5px; top: 468.65px; font-size: 13px; line-height: 13px; font-weight: 700; color: rgb(17, 17, 17); letter-spacing: -0.65px; transform: scaleX(0.982); transform-origin: 0px 0px;">9<b class="n1">1</b>%</span>
<span class="t" style="left:248.00px;top:518.39px;font-size:11.5px;line-height:11.5px;font-weight:700;color:#333438;">06 Apr 2023</span>
<span class="t" style="left: 248px; top: 535.19px; font-size: 11.5px; line-height: 11.5px; font-weight: 700; color: rgb(51, 52, 56); letter-spacing: -0.176px;">07 Apr 2023</span>
<span class="t" style="left: 330.8px; top: 527.04px; font-size: 11px; line-height: 11px; font-weight: 400; color: rgb(91, 93, 98); letter-spacing: 0.071px;"><b class="n1">1</b>8.664</span>
<span class="t" style="left:501.40px;top:527.04px;font-size:11px;line-height:11px;font-weight:400;color:#5b5d62;"><b class="n1">1</b>.004</span>
<span class="t" style="left: 701px; top: 527.04px; font-size: 11px; line-height: 11px; font-weight: 400; color: rgb(91, 93, 98); letter-spacing: -0.406px;">0<b class="n1">1</b>:3<b class="n1">1</b></span>
<span class="t" style="left: 806.4px; top: 527.04px; font-size: 11px; line-height: 11px; font-weight: 400; color: rgb(91, 93, 98); letter-spacing: -0.521px;">MAT<b class="n1">1</b></span>
<span class="t" style="left: 910.3px; top: 518.74px; font-size: 11px; line-height: 11px; font-weight: 400; color: rgb(91, 93, 98); letter-spacing: 0.199px;"><b class="n1">1</b>00349</span>
<span class="t" style="left: 910.3px; top: 535.34px; font-size: 11px; line-height: 11px; font-weight: 400; color: rgb(91, 93, 98); letter-spacing: 0.119px;"><b class="n1">1</b>76406</span>
<span class="t" style="left: 1130.3px; top: 525.15px; font-size: 13px; line-height: 13px; font-weight: 700; color: rgb(17, 17, 17); letter-spacing: -0.266px;">90%</span>
<span class="t" style="left: 1256.3px; top: 525.15px; font-size: 13px; line-height: 13px; font-weight: 700; color: rgb(17, 17, 17); letter-spacing: -0.65px; transform: scaleX(0.9502); transform-origin: 0px 0px;">97%</span>
<span class="t" style="left: 1381.5px; top: 525.15px; font-size: 13px; line-height: 13px; font-weight: 700; color: rgb(17, 17, 17); letter-spacing: -0.266px;">94%</span>
<span class="t" style="left:248.00px;top:586.89px;font-size:11.5px;line-height:11.5px;font-weight:700;color:#333438;">05 Apr 2023</span>
<span class="t" style="left:248.00px;top:603.69px;font-size:11.5px;line-height:11.5px;font-weight:700;color:#333438;">06 Apr 2023</span>
<span class="t" style="left:330.80px;top:595.54px;font-size:11px;line-height:11px;font-weight:400;color:#5b5d62;"><b class="n1">1</b>8.932</span>
<span class="t" style="left:501.40px;top:595.54px;font-size:11px;line-height:11px;font-weight:400;color:#5b5d62;"><b class="n1">1</b>.004</span>
<span class="t" style="left:701.00px;top:595.54px;font-size:11px;line-height:11px;font-weight:400;color:#5b5d62;">0<b class="n1">1</b>:32</span>
<span class="t" style="left: 806.4px; top: 595.54px; font-size: 11px; line-height: 11px; font-weight: 400; color: rgb(91, 93, 98); letter-spacing: -0.521px;">MAT<b class="n1">1</b></span>
<span class="t" style="left: 910.3px; top: 578.94px; font-size: 11px; line-height: 11px; font-weight: 400; color: rgb(91, 93, 98); letter-spacing: 0.199px;"><b class="n1">1</b>00349</span>
<span class="t" style="left: 910.3px; top: 595.54px; font-size: 11px; line-height: 11px; font-weight: 400; color: rgb(91, 93, 98); letter-spacing: 0.119px;"><b class="n1">1</b>76406</span>
<span class="t" style="left:910.30px;top:612.14px;font-size:11px;line-height:11px;font-weight:400;color:#5b5d62;"><b class="n1">1</b>33452</span>
<span class="t" style="left: 1130.3px; top: 593.65px; font-size: 13px; line-height: 13px; font-weight: 700; color: rgb(17, 17, 17); letter-spacing: -0.266px;">90%</span>
<span class="t" style="left: 1256.3px; top: 593.65px; font-size: 13px; line-height: 13px; font-weight: 700; color: rgb(17, 17, 17); letter-spacing: -0.65px; transform: scaleX(0.9502); transform-origin: 0px 0px;">97%</span>
<span class="t" style="left: 1381.5px; top: 593.65px; font-size: 13px; line-height: 13px; font-weight: 700; color: rgb(17, 17, 17); letter-spacing: -0.266px;">94%</span>
<span class="t" style="left:248.00px;top:655.99px;font-size:11.5px;line-height:11.5px;font-weight:700;color:#333438;">04 Apr</span>
<span class="t" style="left:248.00px;top:672.79px;font-size:11.5px;line-height:11.5px;font-weight:700;color:#333438;">2023</span>
<span class="t" style="left:248.00px;top:689.59px;font-size:11.5px;line-height:11.5px;font-weight:700;color:#333438;">05 Apr 2023</span>
<span class="t" style="left:330.80px;top:673.04px;font-size:11px;line-height:11px;font-weight:400;color:#5b5d62;"><b class="n1">1</b>8.838</span>
<span class="t" style="left:501.40px;top:673.04px;font-size:11px;line-height:11px;font-weight:400;color:#5b5d62;"><b class="n1">1</b>.004</span>
<span class="t" style="left: 701px; top: 673.04px; font-size: 11px; line-height: 11px; font-weight: 400; color: rgb(91, 93, 98); letter-spacing: -0.406px;">0<b class="n1">1</b>:3<b class="n1">1</b></span>
<span class="t" style="left:806.40px;top:655.74px;font-size:11px;line-height:11px;font-weight:400;color:#5b5d62;">MAT2</span>
<span class="t" style="left:806.40px;top:673.04px;font-size:11px;line-height:11px;font-weight:400;color:#5b5d62;">MAT3</span>
<span class="t" style="left: 806.4px; top: 690.34px; font-size: 11px; line-height: 11px; font-weight: 400; color: rgb(91, 93, 98); letter-spacing: -0.521px;">MAT<b class="n1">1</b></span>
<span class="t" style="left: 910.3px; top: 664.74px; font-size: 11px; line-height: 11px; font-weight: 400; color: rgb(91, 93, 98); letter-spacing: 0.119px;"><b class="n1">1</b>76406</span>
<span class="t" style="left:910.30px;top:681.34px;font-size:11px;line-height:11px;font-weight:400;color:#5b5d62;"><b class="n1">1</b>33452</span>
<span class="t" style="left: 1130.3px; top: 671.15px; font-size: 13px; line-height: 13px; font-weight: 700; color: rgb(17, 17, 17); letter-spacing: -0.266px;">90%</span>
<span class="t" style="left: 1256.3px; top: 671.15px; font-size: 13px; line-height: 13px; font-weight: 700; color: rgb(17, 17, 17); letter-spacing: -0.65px; transform: scaleX(0.9502); transform-origin: 0px 0px;">97%</span>
<span class="t" style="left: 1381.5px; top: 671.15px; font-size: 13px; line-height: 13px; font-weight: 700; color: rgb(17, 17, 17); letter-spacing: -0.266px;">94%</span>
<span class="t" style="left:248.00px;top:729.99px;font-size:11.5px;line-height:11.5px;font-weight:700;color:#333438;">03 Apr 2023</span>
<span class="t" style="left:248.00px;top:746.79px;font-size:11.5px;line-height:11.5px;font-weight:700;color:#333438;">04 Apr</span>
<span class="t" style="left:248.00px;top:763.59px;font-size:11.5px;line-height:11.5px;font-weight:700;color:#333438;">2023</span>
<span class="t" style="left:330.80px;top:747.04px;font-size:11px;line-height:11px;font-weight:400;color:#5b5d62;"><b class="n1">1</b>8.950</span>
<span class="t" style="left:501.40px;top:747.04px;font-size:11px;line-height:11px;font-weight:400;color:#5b5d62;"><b class="n1">1</b>.004</span>
<span class="t" style="left:701.00px;top:747.04px;font-size:11px;line-height:11px;font-weight:400;color:#5b5d62;">0<b class="n1">1</b>:28</span>
<span class="t" style="left:806.40px;top:738.39px;font-size:11px;line-height:11px;font-weight:400;color:#5b5d62;">MAT2</span>
<span class="t" style="left:806.40px;top:755.69px;font-size:11px;line-height:11px;font-weight:400;color:#5b5d62;">MAT3</span>
<span class="t" style="left: 910.3px; top: 738.74px; font-size: 11px; line-height: 11px; font-weight: 400; color: rgb(91, 93, 98); letter-spacing: 0.199px;"><b class="n1">1</b>00349</span>
<span class="t" style="left:910.30px;top:755.34px;font-size:11px;line-height:11px;font-weight:400;color:#5b5d62;"><b class="n1">1</b>33452</span>
<span class="t" style="left: 1130.3px; top: 745.15px; font-size: 13px; line-height: 13px; font-weight: 700; color: rgb(17, 17, 17); letter-spacing: -0.65px; transform: scaleX(0.982); transform-origin: 0px 0px;">9<b class="n1">1</b>%</span>
<span class="t" style="left: 1256.3px; top: 745.15px; font-size: 13px; line-height: 13px; font-weight: 700; color: rgb(17, 17, 17); letter-spacing: -0.65px; transform: scaleX(0.9502); transform-origin: 0px 0px;">97%</span>
<span class="t" style="left: 1381.5px; top: 745.15px; font-size: 13px; line-height: 13px; font-weight: 700; color: rgb(17, 17, 17); letter-spacing: -0.266px;">94%</span>
<span class="t" style="left:248.00px;top:811.89px;font-size:11.5px;line-height:11.5px;font-weight:700;color:#333438;">02 Apr 2023</span>
<span class="t" style="left:248.00px;top:828.69px;font-size:11.5px;line-height:11.5px;font-weight:700;color:#333438;">03 Apr 2023</span>
<span class="t" style="left:330.80px;top:820.54px;font-size:11px;line-height:11px;font-weight:400;color:#5b5d62;"><b class="n1">1</b>8.570</span>
<span class="t" style="left:501.40px;top:820.54px;font-size:11px;line-height:11px;font-weight:400;color:#5b5d62;"><b class="n1">1</b>.004</span>
<span class="t" style="left:701.00px;top:820.54px;font-size:11px;line-height:11px;font-weight:400;color:#5b5d62;">0<b class="n1">1</b>:26</span>
<span class="t" style="left:806.40px;top:803.24px;font-size:11px;line-height:11px;font-weight:400;color:#5b5d62;">MAT2</span>
<span class="t" style="left:806.40px;top:820.54px;font-size:11px;line-height:11px;font-weight:400;color:#5b5d62;">MAT3</span>
<span class="t" style="left: 806.4px; top: 837.84px; font-size: 11px; line-height: 11px; font-weight: 400; color: rgb(91, 93, 98); letter-spacing: -0.521px;">MAT<b class="n1">1</b></span>
<span class="t" style="left: 910.3px; top: 803.94px; font-size: 11px; line-height: 11px; font-weight: 400; color: rgb(91, 93, 98); letter-spacing: 0.199px;"><b class="n1">1</b>00349</span>
<span class="t" style="left: 910.3px; top: 820.54px; font-size: 11px; line-height: 11px; font-weight: 400; color: rgb(91, 93, 98); letter-spacing: 0.119px;"><b class="n1">1</b>76406</span>
<span class="t" style="left:910.30px;top:837.14px;font-size:11px;line-height:11px;font-weight:400;color:#5b5d62;"><b class="n1">1</b>33452</span>
<span class="t" style="left: 1130.3px; top: 818.65px; font-size: 13px; line-height: 13px; font-weight: 700; color: rgb(17, 17, 17); letter-spacing: -0.65px; transform: scaleX(0.982); transform-origin: 0px 0px;">9<b class="n1">1</b>%</span>
<span class="t" style="left: 1256.3px; top: 818.65px; font-size: 13px; line-height: 13px; font-weight: 700; color: rgb(17, 17, 17); letter-spacing: -0.65px; transform: scaleX(0.9502); transform-origin: 0px 0px;">97%</span>
<span class="t" style="left: 1381.5px; top: 818.65px; font-size: 13px; line-height: 13px; font-weight: 700; color: rgb(17, 17, 17); letter-spacing: -0.266px;">94%</span>

</body></html>
